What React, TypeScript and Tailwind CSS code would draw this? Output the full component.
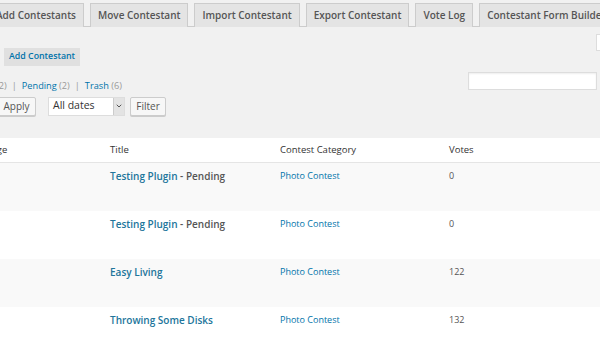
import { ChevronDown } from "lucide-react";

type Row = {
  title: string;
  pending?: boolean;
  category: string;
  votes: number;
  striped: boolean;
};

const tabs = [
  "Add Contestants",
  "Move Contestant",
  "Import Contestant",
  "Export Contestant",
  "Vote Log",
  "Contestant Form Builder",
];

const rows: Row[] = [
  { title: "Testing Plugin", pending: true, category: "Photo Contest", votes: 0, striped: true },
  { title: "Testing Plugin", pending: true, category: "Photo Contest", votes: 0, striped: false },
  { title: "Easy Living", category: "Photo Contest", votes: 122, striped: true },
  { title: "Throwing Some Disks", category: "Photo Contest", votes: 132, striped: false },
];

const App = () => {
  return (
    <div className="w-[600px] h-[355px] overflow-hidden bg-[#f1f1f1] font-['Open_Sans',sans-serif] text-[#555]">
      {/* Tabs */}
      <div className="mt-[3px] h-[24px] flex items-end gap-[6px] border-b border-[#ccc] whitespace-nowrap -ml-[12px]">
        {tabs.map((tab) => (
          <div
            key={tab}
            className="h-[24px] shrink-0 px-[7px] flex items-center bg-[#e4e4e4] border border-b-0 border-[#ccc] text-[10px] font-semibold text-[#555] -mb-px"
          >
            {tab}
          </div>
        ))}
      </div>

      {/* Add button row */}
      <div className="mt-[7px] flex items-start justify-between">
        <div className="mt-[14px] ml-[4px] h-[18px] px-[5px] flex items-center bg-[#e0e0e0] text-[8.8px] font-semibold text-[#0073aa]">
          Add Contestant
        </div>
        <div className="w-[10px] h-[17px] -mr-[6px] bg-white border border-[#ddd]" />
      </div>

      {/* Status links + search */}
      <div className="mt-[6px] flex items-start justify-between">
        <div className="mt-[7px] -ml-[22px] flex items-center gap-[5px] text-[9.2px] whitespace-nowrap">
          <span>
            <span className="text-[#0073aa]">All</span> <span className="text-[#999]">(12)</span>
          </span>
          <span className="text-[#999]">|</span>
          <span>
            <span className="text-[#0073aa]">Pending</span> <span className="text-[#999]">(2)</span>
          </span>
          <span className="text-[#999]">|</span>
          <span>
            <span className="text-[#0073aa]">Trash</span> <span className="text-[#999]">(6)</span>
          </span>
        </div>
        <div className="w-[129px] h-[18px] mr-[3px] bg-white border border-[#ddd] shadow-[inset_0_1px_2px_rgba(0,0,0,0.07)]" />
      </div>

      {/* Bulk actions */}
      <div className="mt-[4px] flex items-center gap-[5px] -ml-[3px]">
        <div className="h-[19px] w-[39px] flex items-center justify-center bg-[#f7f7f7] border border-[#ccc] rounded-[2px] shadow-[0_1px_0_#ccc] text-[10px] text-[#555]">
          Apply
        </div>
        <div className="ml-[7px] h-[19px] w-[77px] flex items-stretch bg-white border border-[#ddd]">
          <div className="flex-1 flex items-center pl-[4px] text-[10.5px] text-[#333]">All dates</div>
          <div className="w-[11px] flex items-center justify-center bg-[#e3e3e3] border-l border-[#ccc]">
            <ChevronDown className="w-[8px] h-[8px] text-[#555]" strokeWidth={3} />
          </div>
        </div>
        <div className="h-[19px] w-[36px] flex items-center justify-center bg-[#f7f7f7] border border-[#ccc] rounded-[2px] shadow-[0_1px_0_#ccc] text-[10px] text-[#555]">
          Filter
        </div>
      </div>

      {/* Table */}
      <div className="mt-[22px] -ml-[30px] w-[630px] bg-white">
        <div className="grid grid-cols-[140px_170px_169px_1fr] h-[25px] items-center border-b border-[#e5e5e5] text-[9.5px] text-[#333]">
          <div className="pl-[10px]">Image</div>
          <div>Title</div>
          <div>Contest Category</div>
          <div>Votes</div>
        </div>
        {rows.map((row, i) => (
          <div
            key={i}
            className={`grid grid-cols-[140px_170px_169px_1fr] h-[48px] pt-[6px] ${row.striped ? "bg-[#f9f9f9]" : "bg-white"}`}
          >
            <div />
            <div className="text-[10px] font-semibold leading-[14px]">
              <span className="text-[#21759b]">{row.title}</span>
              {row.pending && <span className="text-[#555]"> - Pending</span>}
            </div>
            <div className="text-[9px] leading-[14px] text-[#0073aa]">{row.category}</div>
            <div className="text-[9px] leading-[14px] text-[#555]">{row.votes}</div>
          </div>
        ))}
      </div>
    </div>
  );
};

export default App;
